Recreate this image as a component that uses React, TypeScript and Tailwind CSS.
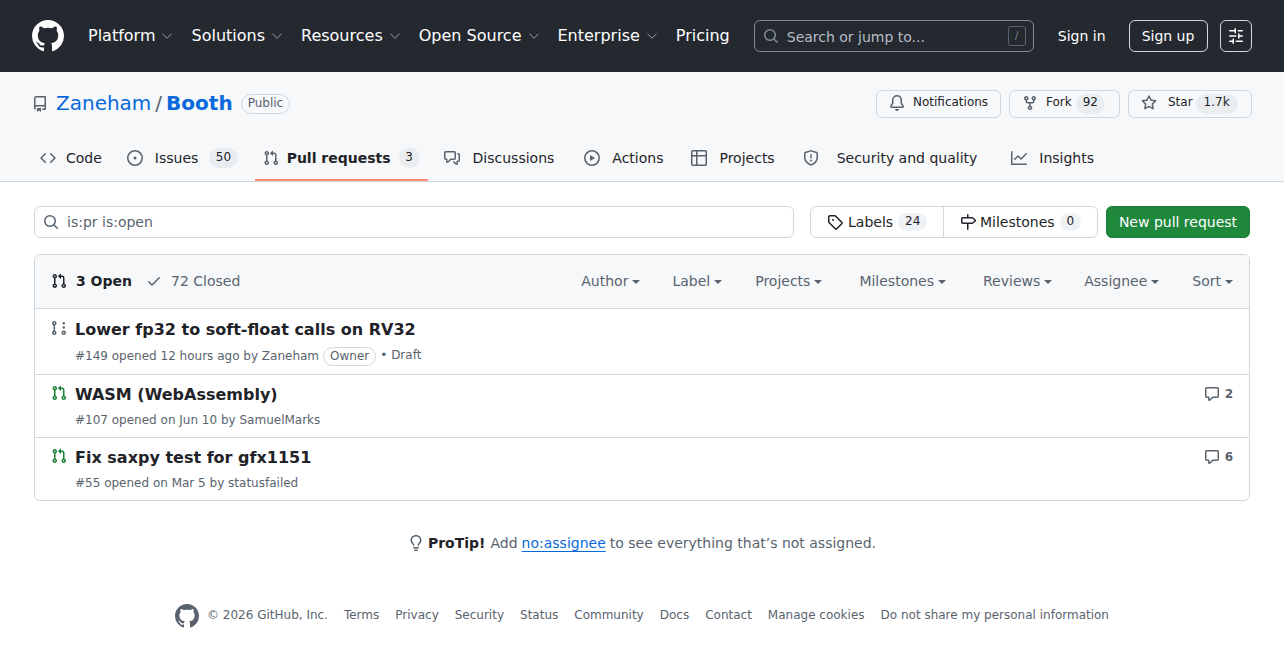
const paths = {
  mark: "M8 0c4.42 0 8 3.58 8 8a8.013 8.013 0 0 1-5.45 7.59c-.4.08-.55-.17-.55-.38 0-.27.01-1.13.01-2.2 0-.75-.25-1.23-.54-1.48 1.78-.2 3.65-.88 3.65-3.95 0-.88-.31-1.59-.82-2.15.08-.2.36-1.02-.08-2.12 0 0-.67-.22-2.2.82-.64-.18-1.32-.27-2-.27-.68 0-1.36.09-2 .27-1.53-1.03-2.2-.82-2.2-.82-.44 1.1-.16 1.92-.08 2.12-.51.56-.82 1.28-.82 2.15 0 3.06 1.86 3.75 3.64 3.95-.23.2-.44.55-.51 1.07-.46.21-1.61.55-2.33-.66-.15-.24-.6-.83-1.23-.82-.67.01-.27.38.01.53.34.19.73.9.82 1.13.16.45.68 1.31 2.69.94 0 .67.01 1.3.01 1.49 0 .21-.15.45-.55.38A7.995 7.995 0 0 1 0 8c0-4.42 3.58-8 8-8Z",
  repo: "M2 2.5A2.5 2.5 0 0 1 4.5 0h8.75a.75.75 0 0 1 .75.75v12.5a.75.75 0 0 1-.75.75h-2.5a.75.75 0 0 1 0-1.5h1.75v-2h-8a1 1 0 0 0-.714 1.7.75.75 0 1 1-1.072 1.05A2.495 2.495 0 0 1 2 11.5Zm10.5-1h-8a1 1 0 0 0-1 1v6.708A2.486 2.486 0 0 1 4.5 9h8ZM5 12.25a.25.25 0 0 1 .25-.25h3.5a.25.25 0 0 1 .25.25v3.25a.25.25 0 0 1-.4.2l-1.45-1.087a.249.249 0 0 0-.3 0L5.4 15.7a.25.25 0 0 1-.4-.2Z",
  code: "m11.28 3.22 4.25 4.25a.75.75 0 0 1 0 1.06l-4.25 4.25a.749.749 0 0 1-1.275-.326.749.749 0 0 1 .215-.734L13.94 8l-3.72-3.72a.749.749 0 0 1 .326-1.275.749.749 0 0 1 .734.215Zm-6.56 0a.751.751 0 0 1 1.042.018.751.751 0 0 1 .018 1.042L2.06 8l3.72 3.72a.749.749 0 0 1-.326 1.275.749.749 0 0 1-.734-.215L.47 8.53a.75.75 0 0 1 0-1.06Z",
  issue: "M8 9.5a1.5 1.5 0 1 0 0-3 1.5 1.5 0 0 0 0 3ZM8 0a8 8 0 1 1 0 16A8 8 0 0 1 8 0ZM1.5 8a6.5 6.5 0 1 0 13 0 6.5 6.5 0 0 0-13 0Z",
  pr: "M1.5 3.25a2.25 2.25 0 1 1 3 2.122v5.256a2.251 2.251 0 1 1-1.5 0V5.372A2.25 2.25 0 0 1 1.5 3.25Zm5.677-.177L9.573.677A.25.25 0 0 1 10 .854V2.5h1A2.5 2.5 0 0 1 13.5 5v5.628a2.251 2.251 0 1 1-1.5 0V5a1 1 0 0 0-1-1h-1v1.646a.25.25 0 0 1-.427.177L7.177 3.427a.25.25 0 0 1 0-.354ZM3.75 2.5a.75.75 0 1 0 0 1.5.75.75 0 0 0 0-1.5Zm0 9.5a.75.75 0 1 0 0 1.5.75.75 0 0 0 0-1.5Zm8.25.75a.75.75 0 1 0 1.5 0 .75.75 0 0 0-1.5 0Z",
  discussion: "M1.75 1h8.5c.966 0 1.75.784 1.75 1.75v5.5A1.75 1.75 0 0 1 10.25 10H7.061l-2.574 2.573A1.458 1.458 0 0 1 2 11.543V10h-.25A1.75 1.75 0 0 1 0 8.25v-5.5C0 1.784.784 1 1.75 1ZM1.5 2.75v5.5c0 .138.112.25.25.25h1a.75.75 0 0 1 .75.75v2.19l2.72-2.72a.749.749 0 0 1 .53-.22h3.5a.25.25 0 0 0 .25-.25v-5.5a.25.25 0 0 0-.25-.25h-8.5a.25.25 0 0 0-.25.25Zm13 2a.25.25 0 0 0-.25-.25h-.5a.75.75 0 0 1 0-1.5h.5c.966 0 1.75.784 1.75 1.75v5.5A1.75 1.75 0 0 1 14.25 12H14v1.543a1.458 1.458 0 0 1-2.487 1.03L9.22 12.28a.749.749 0 0 1 .326-1.275.749.749 0 0 1 .734.215l2.22 2.22v-2.19a.75.75 0 0 1 .75-.75h1a.25.25 0 0 0 .25-.25Z",
  play: "M8 0a8 8 0 1 1 0 16A8 8 0 0 1 8 0ZM1.5 8a6.5 6.5 0 1 0 13 0 6.5 6.5 0 0 0-13 0Zm4.879-2.773 4.264 2.559a.25.25 0 0 1 0 .428l-4.264 2.559A.25.25 0 0 1 6 10.559V5.442a.25.25 0 0 1 .379-.215Z",
  table: "M0 1.75C0 .784.784 0 1.75 0h12.5C15.216 0 16 .784 16 1.75v12.5A1.75 1.75 0 0 1 14.25 16H1.75A1.75 1.75 0 0 1 0 14.25ZM6.5 6.5v8h7.75a.25.25 0 0 0 .25-.25V6.5Zm8-1.5V1.75a.25.25 0 0 0-.25-.25H6.5V5Zm-13 1.5v7.75c0 .138.112.25.25.25H5v-8ZM5 5V1.5H1.75a.25.25 0 0 0-.25.25V5Z",
  shield: "M7.467.133a1.748 1.748 0 0 1 1.066 0l5.25 1.68A1.75 1.75 0 0 1 15 3.48V7c0 1.566-.32 3.182-1.303 4.682-.983 1.498-2.585 2.813-5.032 3.855a1.697 1.697 0 0 1-1.33 0c-2.447-1.042-4.049-2.357-5.032-3.855C1.32 10.182 1 8.566 1 7V3.48a1.75 1.75 0 0 1 1.217-1.667Zm.61 1.429a.25.25 0 0 0-.153 0l-5.25 1.68a.25.25 0 0 0-.174.238V7c0 1.358.275 2.666 1.057 3.86.784 1.194 2.121 2.34 4.366 3.297a.196.196 0 0 0 .154 0c2.245-.956 3.582-2.104 4.366-3.298C13.225 9.666 13.5 8.36 13.5 7V3.48a.251.251 0 0 0-.174-.237l-5.25-1.68ZM8.75 4.75v3a.75.75 0 0 1-1.5 0v-3a.75.75 0 0 1 1.5 0ZM9 10.5a1 1 0 1 1-2 0 1 1 0 0 1 2 0Z",
  graph: "M1.5 1.75V13.5h13.75a.75.75 0 0 1 0 1.5H.75a.75.75 0 0 1-.75-.75V1.75a.75.75 0 0 1 1.5 0Zm14.28 2.53-5.25 5.25a.75.75 0 0 1-1.06 0L7 7.06 4.28 9.78a.751.751 0 0 1-1.042-.018.751.751 0 0 1-.018-1.042l3.25-3.25a.75.75 0 0 1 1.06 0L10 7.94l4.72-4.72a.751.751 0 0 1 1.042.018.751.751 0 0 1 .018 1.042Z",
  bell: "M8 16a2 2 0 0 0 1.985-1.75c.017-.137-.097-.25-.235-.25h-3.5c-.138 0-.252.113-.235.25A2 2 0 0 0 8 16ZM3 5a5 5 0 0 1 10 0v2.947c0 .05.015.098.042.139l1.703 2.555A1.519 1.519 0 0 1 13.482 13H2.518a1.516 1.516 0 0 1-1.263-2.36l1.703-2.554A.255.255 0 0 0 3 7.947Zm5-3.5A3.5 3.5 0 0 0 4.5 5v2.947c0 .346-.102.683-.294.97l-1.703 2.556a.017.017 0 0 0-.003.01l.001.006c0 .002.002.004.004.006l.006.004.007.001h10.964l.007-.001.006-.004.004-.006.001-.007a.017.017 0 0 0-.003-.01l-1.703-2.554a1.745 1.745 0 0 1-.294-.97V5A3.5 3.5 0 0 0 8 1.5Z",
  fork: "M5 5.372v.878c0 .414.336.75.75.75h4.5a.75.75 0 0 0 .75-.75v-.878a2.25 2.25 0 1 1 1.5 0v.878a2.25 2.25 0 0 1-2.25 2.25h-1.5v2.128a2.251 2.251 0 1 1-1.5 0V8.5h-1.5A2.25 2.25 0 0 1 3.5 6.25v-.878a2.25 2.25 0 1 1 1.5 0ZM5 3.25a.75.75 0 1 0-1.5 0 .75.75 0 0 0 1.5 0Zm6.75.75a.75.75 0 1 0 0-1.5.75.75 0 0 0 0 1.5Zm-3 8.75a.75.75 0 1 0-1.5 0 .75.75 0 0 0 1.5 0Z",
  star: "M8 .25a.75.75 0 0 1 .673.418l1.882 3.815 4.21.612a.75.75 0 0 1 .416 1.279l-3.046 2.97.719 4.192a.751.751 0 0 1-1.088.791L8 12.347l-3.766 1.98a.75.75 0 0 1-1.088-.79l.72-4.194L.818 6.374a.75.75 0 0 1 .416-1.28l4.21-.611L7.327.668A.75.75 0 0 1 8 .25Zm0 2.445L6.615 5.5a.75.75 0 0 1-.564.41l-3.097.45 2.24 2.184a.75.75 0 0 1 .216.664l-.528 3.084 2.769-1.456a.75.75 0 0 1 .698 0l2.77 1.456-.53-3.084a.75.75 0 0 1 .216-.664l2.24-2.183-3.096-.45a.75.75 0 0 1-.564-.41L8 2.694Z",
  search: "M10.68 11.74a6 6 0 0 1-7.922-8.982 6 6 0 0 1 8.982 7.922l3.04 3.04a.749.749 0 0 1-.326 1.275.749.749 0 0 1-.734-.215ZM11.5 7a4.499 4.499 0 1 0-8.997 0A4.499 4.499 0 0 0 11.5 7Z",
  tag: "M1 7.775V2.75C1 1.784 1.784 1 2.75 1h5.025c.464 0 .91.184 1.238.513l6.25 6.25a1.75 1.75 0 0 1 0 2.474l-5.026 5.026a1.75 1.75 0 0 1-2.474 0l-6.25-6.25A1.752 1.752 0 0 1 1 7.775Zm1.5 0c0 .066.026.13.073.177l6.25 6.25a.25.25 0 0 0 .354 0l5.025-5.025a.25.25 0 0 0 0-.354l-6.25-6.25a.25.25 0 0 0-.177-.073H2.75a.25.25 0 0 0-.25.25ZM6 5a1 1 0 1 1 0 2 1 1 0 0 1 0-2Z",
  milestone: "M7.75 0a.75.75 0 0 1 .75.75V3h3.634c.414 0 .814.147 1.13.414l2.07 1.75a1.75 1.75 0 0 1 0 2.672l-2.07 1.75a1.75 1.75 0 0 1-1.13.414H8.5v5.25a.75.75 0 0 1-1.5 0V10H2.75A1.75 1.75 0 0 1 1 8.25v-3.5C1 3.784 1.784 3 2.75 3H7V.75A.75.75 0 0 1 7.75 0Zm4.384 8.5a.25.25 0 0 0 .161-.06l2.07-1.75a.248.248 0 0 0 0-.38l-2.07-1.75a.25.25 0 0 0-.161-.06H2.75a.25.25 0 0 0-.25.25v3.5c0 .138.112.25.25.25h9.384Z",
  check: "M13.78 4.22a.75.75 0 0 1 0 1.06l-7.25 7.25a.75.75 0 0 1-1.06 0L2.22 9.28a.751.751 0 0 1 .018-1.042.751.751 0 0 1 1.042-.018L6 10.94l6.72-6.72a.75.75 0 0 1 1.06 0Z",
  draft: "M3.25 1A2.25 2.25 0 0 1 4 5.372v5.256a2.251 2.251 0 1 1-1.5 0V5.372A2.251 2.251 0 0 1 3.25 1Zm9.5 14a2.25 2.25 0 1 1 0-4.5 2.25 2.25 0 0 1 0 4.5ZM2.5 3.25a.75.75 0 1 0 1.5 0 .75.75 0 0 0-1.5 0ZM3.25 12a.75.75 0 1 0 0 1.5.75.75 0 0 0 0-1.5Zm9.5 0a.75.75 0 1 0 0 1.5.75.75 0 0 0 0-1.5ZM14 7.5a1.25 1.25 0 1 1-2.5 0 1.25 1.25 0 0 1 2.5 0Zm0-4.25a1.25 1.25 0 1 1-2.5 0 1.25 1.25 0 0 1 2.5 0Z",
  comment: "M1 2.75C1 1.784 1.784 1 2.75 1h10.5c.966 0 1.75.784 1.75 1.75v7.5A1.75 1.75 0 0 1 13.25 12H9.06l-2.573 2.573A1.458 1.458 0 0 1 4 13.543V12H2.75A1.75 1.75 0 0 1 1 10.25Zm1.75-.25a.25.25 0 0 0-.25.25v7.5c0 .138.112.25.25.25h2a.75.75 0 0 1 .75.75v2.19l2.72-2.72a.749.749 0 0 1 .53-.22h4.5a.25.25 0 0 0 .25-.25v-7.5a.25.25 0 0 0-.25-.25Z",
  bulb: "M8 1.5c-2.363 0-4 1.69-4 3.75 0 .984.424 1.625.984 2.304l.214.253c.223.264.47.556.673.848.284.411.537.896.621 1.49a.75.75 0 0 1-1.484.211c-.04-.282-.163-.547-.37-.847a8.456 8.456 0 0 0-.542-.68c-.084-.1-.173-.205-.268-.32C3.201 7.75 2.5 6.766 2.5 5.25 2.5 2.31 4.863 0 8 0s5.5 2.31 5.5 5.25c0 1.516-.701 2.5-1.328 3.259-.095.115-.184.22-.268.319-.207.245-.383.453-.541.681-.208.3-.33.565-.37.847a.751.751 0 0 1-1.485-.212c.084-.593.337-1.078.621-1.489.203-.292.45-.584.673-.848.075-.088.147-.173.213-.253.561-.679.985-1.32.985-2.304 0-2.06-1.637-3.75-4-3.75ZM5.75 12h4.5a.75.75 0 0 1 0 1.5h-4.5a.75.75 0 0 1 0-1.5ZM6 15.25a.75.75 0 0 1 .75-.75h2.5a.75.75 0 0 1 0 1.5h-2.5a.75.75 0 0 1-.75-.75Z",
  sliders: "M15 2.75a.75.75 0 0 1-.75.75h-4a.75.75 0 0 1 0-1.5h4a.75.75 0 0 1 .75.75Zm-8.5.75v1.25a.75.75 0 0 0 1.5 0v-4a.75.75 0 0 0-1.5 0V2H1.75a.75.75 0 0 0 0 1.5H6.5Zm1.25 5.25a.75.75 0 0 0 0-1.5h-6a.75.75 0 0 0 0 1.5h6ZM15 8a.75.75 0 0 1-.75.75H11.5V10a.75.75 0 1 1-1.5 0V6a.75.75 0 0 1 1.5 0v1.25h2.75A.75.75 0 0 1 15 8Zm-9 5.25v-2a.75.75 0 0 0-1.5 0v1.25H1.75a.75.75 0 0 0 0 1.5H4.5v1.25a.75.75 0 0 0 1.5 0v-2Zm9 0a.75.75 0 0 1-.75.75h-6a.75.75 0 0 1 0-1.5h6a.75.75 0 0 1 .75.75Z",
};

function Octicon({ name, className = "" }: { name: keyof typeof paths; className?: string }) {
  return (
    <svg viewBox="0 0 16 16" fill="currentColor" className={`shrink-0 ${className}`}>
      <path d={paths[name]} />
    </svg>
  );
}

function Chevron() {
  return (
    <svg viewBox="0 0 12 12" fill="none" stroke="currentColor" strokeWidth="1" className="w-3 h-3 ml-[6px] text-[#9ca3ad]">
      <path d="M1.5 3.75 6 8.25 10.5 3.75" />
    </svg>
  );
}

function Caret() {
  return <span className="ml-[4px] mt-[2px] w-0 h-0 border-x-[4px] border-x-transparent border-t-[4px] border-t-[#59636e]" />;
}

const navItems = ["Platform", "Solutions", "Resources", "Open Source", "Enterprise"];

const tabs = [
  { label: "Code", icon: "code", gap: "gap-[10px]", cls: "" },
  { label: "Issues", icon: "issue", gap: "gap-[12px]", cls: "", count: "50", countCls: "px-[6.5px] ml-[-1px]" },
  { label: "Pull requests", icon: "pr", gap: "gap-[8px]", cls: "mr-[-1px]", count: "3", countCls: "w-[21px] justify-center", active: true },
  { label: "Discussions", icon: "discussion", gap: "gap-[13px]", cls: "mr-[5px]" },
  { label: "Actions", icon: "play", gap: "gap-[12px]", cls: "mr-[3px]" },
  { label: "Projects", icon: "table", gap: "gap-[12px]", cls: "mr-[3px]" },
  { label: "Security and quality", icon: "shield", gap: "gap-[18px]", cls: "mr-[9px]" },
  { label: "Insights", icon: "graph", gap: "gap-[12px]", cls: "" },
] as const;

const filters = [
  { label: "Author", cls: "mr-[32px]" },
  { label: "Label", cls: "mr-[33px]" },
  { label: "Projects", cls: "mr-[37px]" },
  { label: "Milestones", cls: "mr-[37px]" },
  { label: "Reviews", cls: "mr-[32px]" },
  { label: "Assignee", cls: "mr-[33px]" },
  { label: "Sort", cls: "" },
];

const pulls = [
  { title: "Lower fp32 to soft-float calls on RV32", meta: "#149 opened 12 hours ago by Zaneham", draft: true, cls: "h-[66px] pt-[9px] border-b border-[#d1d9e0]" },
  { title: "WASM (WebAssembly)", meta: "#107 opened on Jun 10 by SamuelMarks", comments: "2", cls: "h-[63px] pt-[8px] border-b border-[#d1d9e0]" },
  { title: "Fix saxpy test for gfx1151", meta: "#55 opened on Mar 5 by statusfailed", comments: "6", cls: "h-[62px] pt-[8px]" },
];

const footerLinks = ["Terms", "Privacy", "Security", "Status", "Community", "Docs", "Contact", "Manage cookies", "Do not share my personal information"];

export default function App() {
  return (
    <div className="min-h-[668px] bg-white text-[#1f2328] font-['DejaVu_Sans',sans-serif] text-sm overflow-hidden">
      {/* top nav */}
      <header className="h-[72px] bg-[#24292f] flex items-center px-[32px] text-white">
        <Octicon name="mark" className="w-8 h-8 mr-[24px]" />
        {navItems.map((item) => (
          <div key={item} className="flex items-center text-base mr-[18px]">
            {item}
            <Chevron />
          </div>
        ))}
        <span className="text-base">Pricing</span>
        <div className="ml-[24px] w-[280px] h-[32px] rounded-md border border-[#818b98] flex items-center pl-[8px] pr-[7px] text-[#b7bdc8]">
          <Octicon name="search" className="w-4 h-4 text-[#818b98] mr-[8px]" />
          <span className="pt-[2px]">Search or jump to...</span>
          <span className="ml-auto w-[18px] h-[20px] border border-[#59636e] rounded-[3px] flex items-center justify-center text-[10px] text-[#818b98]">/</span>
        </div>
        <span className="ml-[24px]">Sign in</span>
        <div className="ml-[23px] w-[79px] h-[32px] border border-[#d1d9e0] rounded-md flex items-center justify-center">Sign up</div>
        <div className="ml-[12px] w-[32px] h-[32px] border border-[#d1d9e0] rounded-md flex items-center justify-center">
          <Octicon name="sliders" className="w-4 h-4" />
        </div>
      </header>

      {/* repo header */}
      <div className="h-[110px] bg-[#f6f8fa] border-b border-[#d1d9e0] flex flex-col">
        <div className="h-[62px] px-[32px] flex items-center pt-[1px]">
          <Octicon name="repo" className="w-4 h-4 text-[#59636e] mr-[8px]" />
          <a className="text-[20px] text-[#0969da]">Zaneham</a>
          <span className="text-[20px] text-[#59636e] mx-[4px]">/</span>
          <a className="text-[20px] font-bold text-[#0969da]">Booth</a>
          <span className="ml-[8px] h-[20px] px-[6px] rounded-full border border-[#d1d9e0] text-[12px] text-[#59636e] flex items-center">Public</span>
          <div className="ml-auto flex items-center gap-[8px] text-[12px]">
            <div className="h-[28px] w-[125px] border border-[#d1d9e0] rounded-md flex items-center pl-[12px] pb-[2px]">
              <Octicon name="bell" className="w-4 h-4 text-[#59636e] mr-[8px]" />
              Notifications
            </div>
            <div className="h-[28px] w-[111px] border border-[#d1d9e0] rounded-md flex items-center pl-[12px] pb-[2px]">
              <Octicon name="fork" className="w-4 h-4 text-[#59636e] mr-[8px]" />
              Fork
              <span className="ml-[4px] mt-[2px] pb-[1px] px-[7px] h-[20px] rounded-full bg-[#eaedf0] flex items-center">92</span>
            </div>
            <div className="h-[28px] w-[124px] border border-[#d1d9e0] rounded-md flex items-center pl-[12px] pb-[2px]">
              <Octicon name="star" className="w-4 h-4 text-[#59636e] mr-[11px]" />
              Star
              <span className="ml-[3px] mt-[2px] pb-[1px] px-[8px] h-[20px] rounded-full bg-[#eaedf0] flex items-center">1.7k</span>
            </div>
          </div>
        </div>
        <nav className="flex h-[47px] pl-[32px] gap-[9px]">
          {tabs.map((tab) => (
            <div key={tab.label} className={`relative flex items-center px-[8px] py-[1px] ${tab.gap} ${tab.cls}`}>
              <Octicon name={tab.icon} className="w-4 h-4 text-[#59636e]" />
              <span className={"active" in tab ? "font-bold" : ""}>{tab.label}</span>
              {"count" in tab && (
                <span className={`h-[20px] rounded-full bg-[#eaedf0] text-[12px] flex items-center ${tab.countCls}`}>{tab.count}</span>
              )}
              {"active" in tab && <span className="absolute left-0 right-0 bottom-0 h-[2px] bg-[#fd8c73]" />}
            </div>
          ))}
        </nav>
      </div>

      <main className="px-[34px] pt-[24px]">
        {/* toolbar */}
        <div className="flex items-center h-[32px]">
          <div className="w-[760px] h-[32px] border border-[#d1d9e0] rounded-md flex items-center pl-[8px] text-[#59636e]">
            <Octicon name="search" className="w-4 h-4 mr-[8px]" />
            is:pr is:open
          </div>
          <div className="ml-[16px] h-[32px] w-[288px] border border-[#d1d9e0] rounded-md flex">
            <div className="w-[133px] border-r border-[#d1d9e0] flex items-center pl-[16px]">
              <Octicon name="tag" className="w-4 h-4 mr-[5px]" />
              Labels
              <span className="ml-[5px] px-[7px] h-[18px] rounded-full bg-[#eff2f5] text-[12px] flex items-center">24</span>
            </div>
            <div className="flex-1 flex items-center pl-[16px]">
              <Octicon name="milestone" className="w-4 h-4 mr-[4px]" />
              Milestones
              <span className="ml-[5px] px-[7px] h-[18px] rounded-full bg-[#eff2f5] text-[12px] flex items-center">0</span>
            </div>
          </div>
          <div className="ml-[8px] h-[32px] w-[144px] rounded-md bg-[#1f883d] border border-[#1c7a37] text-white flex items-center justify-center">New pull request</div>
        </div>

        {/* list */}
        <div className="mt-[16px] w-[1216px] border border-[#d1d9e0] rounded-md overflow-hidden">
          <div className="h-[54px] bg-[#f6f8fa] border-b border-[#d1d9e0] flex items-center px-[16px] pb-[2px]">
            <Octicon name="pr" className="w-4 h-4 mr-[9px]" />
            <span className="font-bold">3 Open</span>
            <Octicon name="check" className="w-4 h-4 text-[#59636e] ml-[14px] mr-[9px]" />
            <span className="text-[#59636e]">72 Closed</span>
            <div className="ml-auto flex items-center text-[#59636e]">
              {filters.map((f) => (
                <div key={f.label} className={`flex items-center ${f.cls}`}>
                  {f.label}
                  <Caret />
                </div>
              ))}
            </div>
          </div>
          {pulls.map((pr) => (
            <div key={pr.title} className={`flex px-[16px] ${pr.cls}`}>
              <Octicon
                name={pr.draft ? "draft" : "pr"}
                className={`w-4 h-4 mt-[2px] mr-[8px] ${pr.draft ? "text-[#59636e]" : "text-[#1a7f37]"}`}
              />
              <div className="flex-1">
                <div className="text-base font-bold leading-[24px]">{pr.title}</div>
                <div className="mt-[4px] text-[12px] leading-[18px] text-[#59636e] flex items-center">
                  {pr.meta}
                  {pr.draft && (
                    <>
                      <span className="ml-[4px] h-[19px] px-[6px] rounded-full border border-[#d1d9e0] flex items-center">Owner</span>
                      <span className="ml-[4px] pb-[2px]">• Draft</span>
                    </>
                  )}
                </div>
              </div>
              {pr.comments && (
                <div className="flex items-center h-[16px] mt-[4px] text-[12px] font-bold text-[#59636e]">
                  <Octicon name="comment" className="w-4 h-4 mr-[5px] mb-[2px]" />
                  {pr.comments}
                </div>
              )}
            </div>
          ))}
        </div>

        {/* protip */}
        <div className="mt-[32px] flex justify-center items-center text-[#59636e]">
          <Octicon name="bulb" className="w-4 h-4 mr-[4px]" />
          <b className="text-[#1f2328]">ProTip!</b>
          <span className="ml-[5px]">Add</span>
          <a className="ml-[4px] mr-[4px] text-[#0969da] underline underline-offset-[3px]">no:assignee</a>
          <span>to see everything that’s not assigned.</span>
        </div>
      </main>

      {/* footer */}
      <footer className="mt-[51px] flex justify-center items-center text-[12px] text-[#59636e]">
        <Octicon name="mark" className="w-6 h-6 mr-[8px]" />
        <span className="mr-[16px]">© 2026 GitHub, Inc.</span>
        <div className="flex gap-[16px]">
          {footerLinks.map((l) => (
            <span key={l}>{l}</span>
          ))}
        </div>
      </footer>
    </div>
  );
}
